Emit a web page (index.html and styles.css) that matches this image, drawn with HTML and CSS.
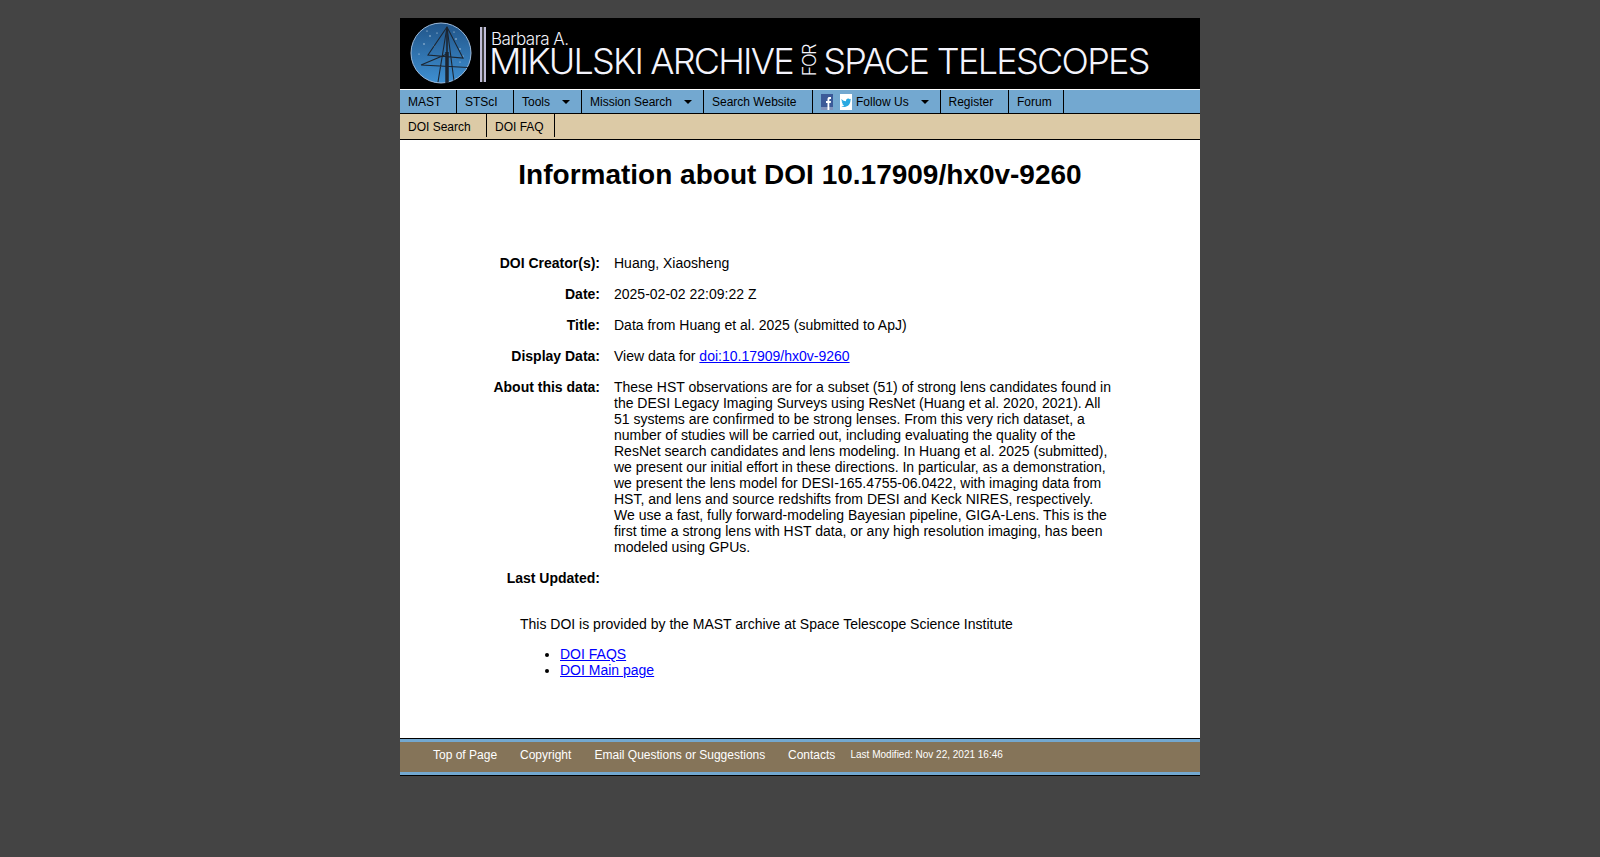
FILE: index.html
```html
<!DOCTYPE html>
<html lang="en">
<head>
<meta charset="utf-8">
<title>Information about DOI 10.17909/hx0v-9260</title>
<link rel="stylesheet" href="styles.css">
</head>
<body>
<div class="page">
  <header class="banner">
    <svg class="seal" viewBox="0 0 62 62" aria-hidden="true">
      <defs><linearGradient id="sky" x1="0" y1="0" x2="0" y2="1"><stop offset="0" stop-color="#215488"/><stop offset="1" stop-color="#3f90d2"/></linearGradient></defs>
      <circle cx="31" cy="31" r="30" fill="url(#sky)" stroke="#9dbbdc" stroke-width="1"/>
      <g fill="#cfe0ef"><circle cx="20" cy="14" r=".7"/><circle cx="14" cy="22" r=".7"/><circle cx="46" cy="17" r=".7"/><circle cx="50" cy="27" r=".7"/><circle cx="9" cy="32" r=".6"/><circle cx="24" cy="24" r=".6"/><circle cx="53" cy="34" r=".6"/><circle cx="44" cy="10" r=".6"/><circle cx="17" cy="9" r=".6"/><circle cx="50" cy="40" r=".6"/><circle cx="27" cy="11" r=".6"/></g>
      <g stroke="#1c2530" fill="none" stroke-width="1.100">
        <path d="M37 5 18 33l35 3zM11 43l47 2.500M11 43l26-11M37 5l-9 55M37 5l7 54"/>
        <path d="M37 5v26" stroke-width="1.600"/>
        <path d="M37 30v31" stroke-width="3.500"/>
      </g>
    </svg>
    <div class="rules"></div>
    <div class="wordmark">
      <div class="barbara">Barbara A.</div>
      <div class="archive"><span class="mik">MIKULSKI ARCHIVE</span><span class="for">FOR</span><span class="spc">SPACE TELESCOPES</span></div>
    </div>
  </header>
  <nav class="nav">
    <a class="item w57">MAST</a>
    <a class="item w57">STScI</a>
    <a class="item w68 drop">Tools</a>
    <a class="item w122 drop">Mission Search</a>
    <a class="item w109">Search Website</a>
    <a class="item w127 drop social">
      <svg class="soc" viewBox="0 0 12 16" aria-hidden="true"><rect width="12" height="16" fill="#3b5a98"/><rect y="13" width="12" height="3" fill="#7f93bd"/><path d="M6.500 16V9H5V7h1.500V5.200C6.500 3.600 7.400 3 8.500 3H10v2H9c-.5 0-.7.2-.7.7V7H10l-.3 2H8.300v7z" fill="#fff"/></svg>
      <svg class="soc" viewBox="0 0 12 16" aria-hidden="true"><rect width="12" height="16" fill="#fff"/><path d="M1.500 5c1.300 1.400 2.800 2.200 4.500 2.300-.2-1.500.8-2.800 2.200-2.800.7 0 1.200.3 1.600.7l1.200-.5-.7 1.200.9-.3-.8 1c.1 3.200-2.300 6.400-5.900 6.400-1.200 0-2.200-.3-3.200-.9 1.100.1 2.200-.2 3-.9-1 0-1.800-.7-2.100-1.600h1C2.500 9.400 1.700 8.500 1.700 7.300l1 .3c-1-.8-1.500-1.500-1.200-2.600z" fill="#29a9e1"/></svg>
      Follow Us
    </a>
    <a class="item w69">Register</a>
    <a class="item w55">Forum</a>
  </nav>
  <nav class="subnav">
    <a class="item w87">DOI Search</a>
    <a class="item w68">DOI FAQ</a>
  </nav>
  <main class="content">
    <h1>Information about DOI 10.17909/hx0v-9260</h1>
    <dl class="info">
      <dt>DOI Creator(s):</dt><dd>Huang, Xiaosheng</dd>
      <dt>Date:</dt><dd>2025-02-02 22:09:22 Z</dd>
      <dt>Title:</dt><dd>Data from Huang et al. 2025 (submitted to ApJ)</dd>
      <dt>Display Data:</dt><dd>View data for <a href="#">doi:10.17909/hx0v-9260</a></dd>
      <dt>About this data:</dt><dd>These HST observations are for a subset (51) of strong lens candidates found in the DESI Legacy Imaging Surveys using ResNet (Huang et al. 2020, 2021). All 51 systems are confirmed to be strong lenses. From this very rich dataset, a number of studies will be carried out, including evaluating the quality of the ResNet search candidates and lens modeling. In Huang et al. 2025 (submitted), we present our initial effort in these directions. In particular, as a demonstration, we present the lens model for DESI-165.4755-06.0422, with imaging data from HST, and lens and source redshifts from DESI and Keck NIRES, respectively. We use a fast, fully forward-modeling Bayesian pipeline, GIGA-Lens. This is the first time a strong lens with HST data, or any high resolution imaging, has been modeled using GPUs.</dd>
      <dt>Last Updated:</dt><dd></dd>
    </dl>
    <p class="note">This DOI is provided by the MAST archive at Space Telescope Science Institute</p>
    <ul class="links">
      <li><a href="#">DOI FAQS</a></li>
      <li><a href="#">DOI Main page</a></li>
    </ul>
  </main>
  <footer class="footer">
    <div class="footbar">
      <a class="f1">Top of Page</a><a class="f2">Copyright</a><a class="f3">Email Questions or Suggestions</a><a class="f4">Contacts</a><span class="modified">Last Modified: Nov 22, 2021 16:46</span>
    </div>
  </footer>
</div>
</body>
</html>
```
FILE: styles.css
```css
* { box-sizing: border-box; }
html, body { margin: 0; padding: 0; }
body { background: #444; font-family: "Liberation Sans", Arial, sans-serif; font-size: 14px; color: #000; height: 857px; overflow: hidden; }
.page { width: 800px; margin: 18px auto 0; background: #fff; }
.banner { height: 71px; background: #000; display: flex; align-items: flex-start; padding: 4px 0 0 10px; color: #f4f4fc; }
.seal { width: 62px; height: 62px; flex: none; }
.rules { width: 6px; height: 55px; margin: 5px 0 0 8px; flex: none; background: #444; border-left: 2px solid #c0bdd8; border-right: 2px solid #c0bdd8; }
.wordmark { margin-left: 4px; font-family: Inter, "Liberation Sans", sans-serif; font-weight: 300; white-space: nowrap; }
.barbara { font-size: 17px; line-height: 16px; margin: 9px 0 0 1px; letter-spacing: -.55px; }
.archive { display: flex; align-items: center; height: 26px; font-size: 36px; line-height: 26px; margin: 1px 0 0 -1px; }
.mik { letter-spacing: -1.800px; }
.spc { letter-spacing: -1.700px; }
.for { font-size: 18px; line-height: 14px; letter-spacing: -1.500px; writing-mode: vertical-rl; transform: rotate(180deg); margin: 0 6.500px 0 10px; }
.nav, .subnav { display: flex; font-size: 12px; line-height: 14px; }
.nav { height: 25px; background: #73a8d0; border-top: 1px solid #fff; border-bottom: 1px solid #000; }
.subnav { height: 26px; background: #dccaa6; border-bottom: 1px solid #000; padding-bottom: 2px; }
.subnav .item { padding-top: 2px; }
.item { display: flex; align-items: center; padding-left: 8px; border-right: 1px solid #000; position: relative; color: #000; }
.w55 { width: 55px; } .w57 { width: 57px; } .w68 { width: 68px; } .w69 { width: 68.500px; } .w87 { width: 87px; } .w109 { width: 109px; } .w122 { width: 122px; } .w127 { width: 127.500px; }
.drop::after { content: ""; position: absolute; right: 11px; top: 10px; border-left: 4px solid transparent; border-right: 4px solid transparent; border-top: 4px solid #000; }
.soc { width: 12px; height: 16px; margin-right: 7px; }
.soc + .soc { margin-right: 4px; }
.content { height: 598px; }
h1 { margin: 0; padding-top: 19px; font-size: 28px; line-height: 32px; text-align: center; font-weight: 700; }
.info { display: grid; grid-template-columns: 200px 502px; column-gap: 14px; row-gap: 15px; margin: 64px 0 0; line-height: 16px; }
.info dt { font-weight: 700; text-align: right; }
.info dd { margin: 0; }
.note { margin: 30px 0 0 120px; line-height: 16px; }
.links { margin: 14px 0 0; padding: 0 0 0 160px; line-height: 16px; }
.content a { color: #00f; text-decoration: underline; }
.footer { height: 38px; border-top: 1px solid #000; border-bottom: 1px solid #000; }
.footbar { height: 36px; background: #857459; border-top: 3px solid #73a8d0; border-bottom: 3px solid #73a8d0; display: flex; align-items: flex-start; padding: 6px 0 0 33px; font-size: 12px; line-height: 14px; color: #fff; }
.f1 { width: 87px; } .f2 { width: 74.500px; } .f3 { width: 193.500px; } .f4 { width: 62.500px; }
.modified { font-size: 10px; }
```
